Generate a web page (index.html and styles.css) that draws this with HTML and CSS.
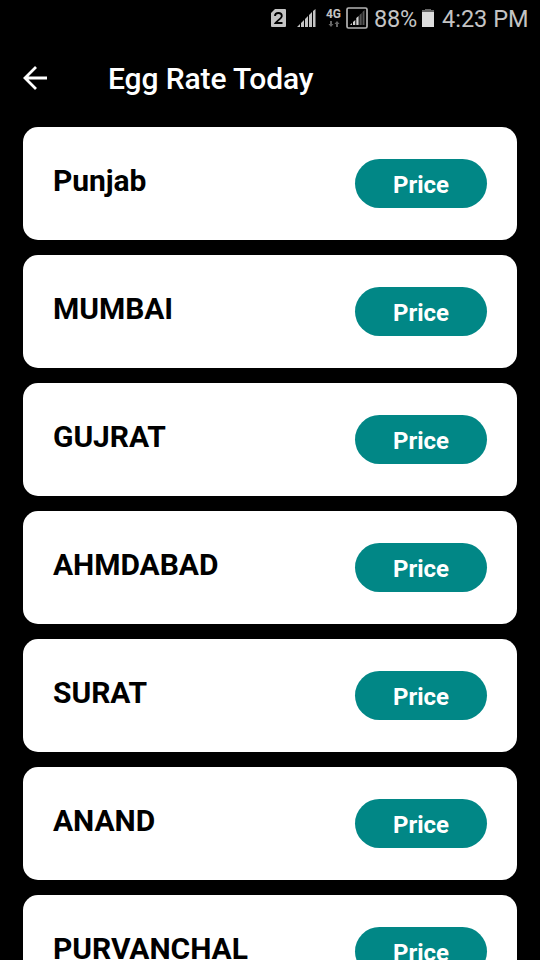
FILE: index.html
```html
<!DOCTYPE html>
<html lang="en">
<head>
<meta charset="utf-8">
<title>Egg Rate Today</title>
<link rel="stylesheet" href="styles.css">
</head>
<body>
<header class="status">
  <svg class="sim" width="15" height="18" viewBox="0 0 15 18"><path fill="#c4c4c4" d="M4 0h10q1 0 1 1v16q0 1-1 1H1q-1 0-1-1V4z"/><path fill="none" stroke="#000" stroke-width="1.800" d="M4 7q0-3 3.400-3T10.800 7c0 2.300-5 5-6.300 7h7"/></svg>
  <svg class="signal" width="19" height="19" viewBox="0 0 19 19"><path fill="#c4c4c4" d="M0 18l3-3v3zM4 14l3-3v7H4zM8 10l3-3v11H8zM12 6l3-3v15h-3zM16 2l2.500-2v18H16z"/></svg>
  <span class="net"><span>4G</span><svg width="12" height="6" viewBox="0 0 12 6"><path fill="#666" d="M2 0h2v3h1.500L3 6 .5 3H2zM8 6h2V3h1.500L9 0 6.500 3H8z"/></svg></span>
  <svg class="boxed" width="22" height="22" viewBox="0 0 22 22"><rect x="1" y="1" width="20" height="20" rx="1.500" fill="none" stroke="#b4b4b4" stroke-width="1.700"/><path fill="#d0d0d0" d="M4 18l2-2v2zM7 15l2.300-2v5H7zM10.300 11l2.300-2v9h-2.300z"/><path fill="#555" d="M13.500 8l2.200-2v12h-2.200zM16.500 5l2-2v15h-2z"/></svg>
  <span class="pct">88%</span>
  <svg class="battery" width="12" height="18" viewBox="0 0 12 18"><path fill="#666" d="M3 0h6v1h3v2H0V1h3z"/><path fill="#ddd" d="M0 3h12v15H0z"/></svg>
  <span class="clock">4:23 PM</span>
</header>
<nav class="bar">
  <svg width="24" height="24" viewBox="0 0 24 24"><path fill="none" stroke="#fff" stroke-width="2.800" d="M24 12H2M13 1L2 12l11 11"/></svg>
  <h1>Egg Rate Today</h1>
</nav>
<main class="list">
  <section class="card"><h2>Punjab</h2><button>Price</button></section>
  <section class="card"><h2>MUMBAI</h2><button>Price</button></section>
  <section class="card"><h2>GUJRAT</h2><button>Price</button></section>
  <section class="card"><h2>AHMDABAD</h2><button>Price</button></section>
  <section class="card"><h2>SURAT</h2><button>Price</button></section>
  <section class="card"><h2>ANAND</h2><button>Price</button></section>
  <section class="card"><h2>PURVANCHAL</h2><button>Price</button></section>
</main>
</body>
</html>
```
FILE: styles.css
```css
* { box-sizing: border-box; }
html, body { height: 960px; overflow: hidden; }
body { margin: 0; width: 540px; background: #000; font-family: Roboto, sans-serif; }
.status { height: 36px; display: flex; align-items: center; padding-left: 271px; color: #c4c4c4; font-size: 23.5px; white-space: nowrap; }
.status svg { flex: none; }
.signal { margin-left: 11px; }
.net { width: 17px; margin-left: 9px; margin-top: -2px; display: flex; flex-direction: column; align-items: center; gap: 1px; font-size: 12px; font-weight: 700; line-height: 12px; }
.boxed { margin-left: 4px; }
.pct { width: 43px; margin-left: 6px; margin-top: 2px; letter-spacing: -0.2px; }
.battery { margin-left: 5px; margin-top: -1px; }
.clock { margin-left: 8px; margin-top: 2px; }
.bar { height: 84px; display: flex; align-items: center; padding-left: 23px; color: #fff; }
.bar h1 { margin: 2px 0 0 61px; font-size: 30px; font-weight: 500; line-height: 36px; letter-spacing: -0.1px; }
.list { display: flex; flex-direction: column; gap: 15px; padding: 7px 23px 0; }
.card { flex: none; height: 113px; display: flex; justify-content: space-between; align-items: flex-start; padding: 32px 30px 0; background: #fff; border-radius: 15px; }
.card h2 { margin: 4px 0 0; font-size: 30px; line-height: 36px; font-weight: 700; color: #000; letter-spacing: -0.05px; }
.card button { width: 132px; height: 49px; padding: 2px 0 0; border: 0; border-radius: 25px; background: #018786; color: #fff; font: 700 24px/28px Roboto, sans-serif; }
```
